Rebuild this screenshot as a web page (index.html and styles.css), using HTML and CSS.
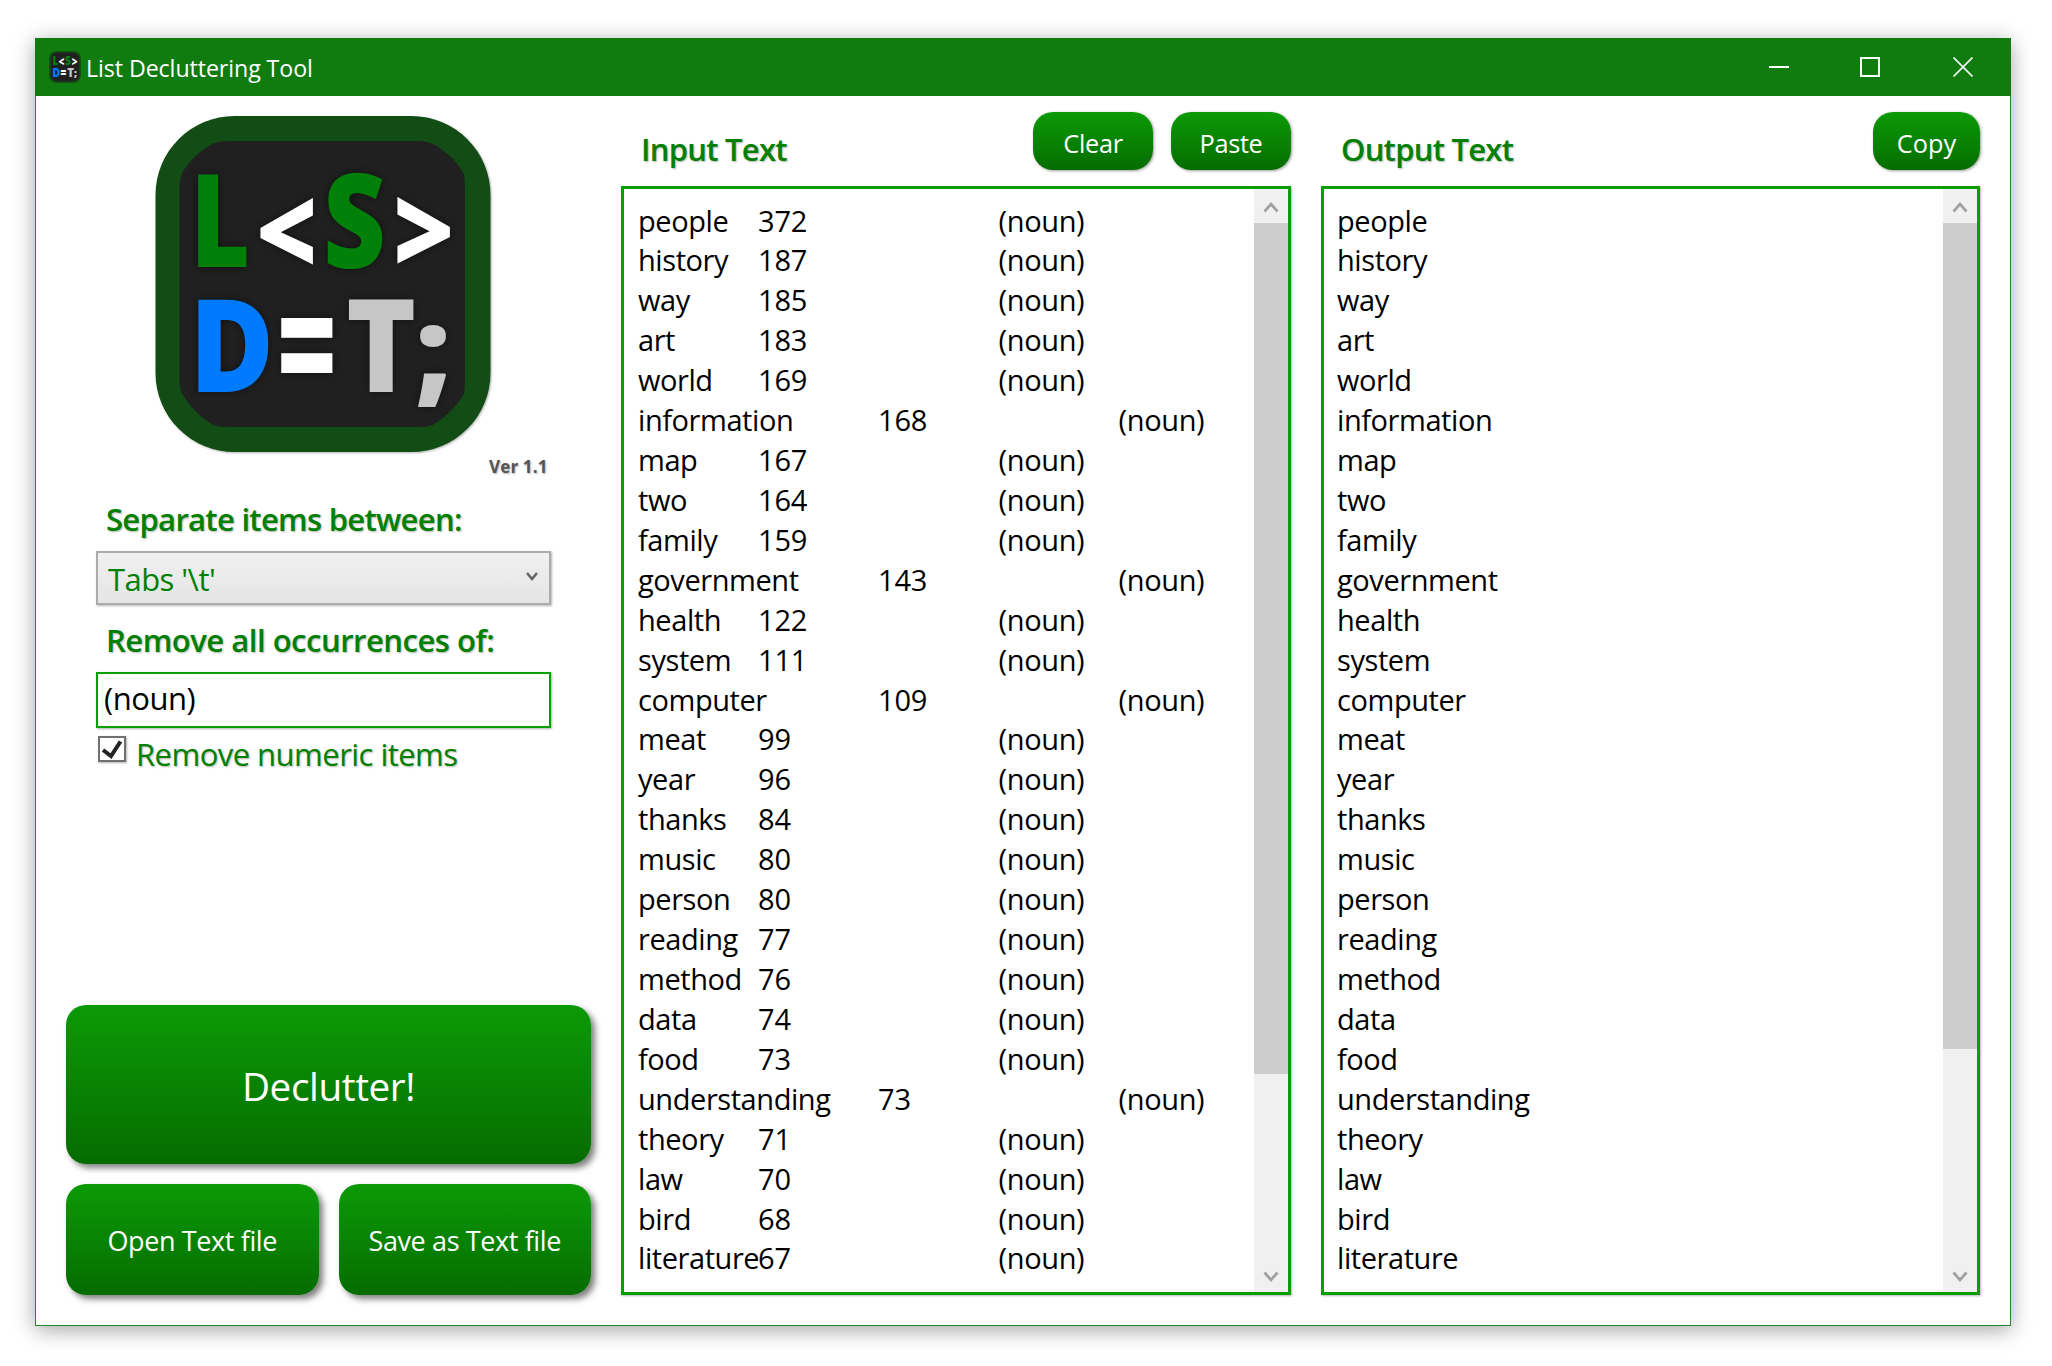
FILE: index.html
```
<!DOCTYPE html>
<html lang="en">
<head>
<meta charset="utf-8">
<title>List Decluttering Tool</title>
<link rel="stylesheet" href="styles.css">
</head>
<body>
<div class="window">
  <header class="titlebar">
    <svg class="titlebar-icon" viewBox="155 116 336 337" aria-hidden="true">
      <rect x="155" y="116" width="336" height="337" rx="78" fill="#124d15"/>
      <rect x="174" y="135" width="298" height="299" rx="60" fill="#202020"/>
      <g class="mark">
        <text transform="translate(190.3 267) scale(1.03 1.3)" fill="#008008">L</text>
        <text transform="translate(255.8 274.7) scale(1.06 1.214)" fill="#fff">&lt;</text>
        <text transform="translate(323.1 267.7) scale(1.09 1.32)" fill="#008008">S</text>
        <text transform="translate(392.8 274.2) scale(1.06 1.214)" fill="#fff">&gt;</text>
        <text transform="translate(189.4 392) scale(1.153 1.3)" fill="#007aff">D</text>
        <text class="mark-equals" transform="translate(273.7 411.8) scale(1.141 1.964)" fill="#fff">=</text>
        <text transform="translate(346.1 392) scale(1.19 1.3)" fill="#c6c6c6">T</text>
        <text transform="translate(414.5 390.6) scale(1.26 1.17)" fill="#c6c6c6">;</text>
      </g>
    </svg>
    <h1 class="titlebar-text">List Decluttering Tool</h1>
    <div class="controls">
      <svg width="20" height="20" viewBox="0 0 20 20"><path d="M0 10H20" stroke="#fff" stroke-width="2"/></svg>
      <svg width="20" height="20" viewBox="0 0 20 20"><rect x="1" y="1" width="18" height="18" fill="none" stroke="#fff" stroke-width="2"/></svg>
      <svg width="20" height="20" viewBox="0 0 20 20"><path d="M.5 .5L19.500 19.500M19.500 .5L.5 19.500" stroke="#f0f6f0" stroke-width="1.700"/></svg>
    </div>
  </header>
  <main class="content">
    <section class="sidebar">
      <svg class="logo" viewBox="155 116 336 337" role="img" aria-label="List Decluttering Tool">
        <rect x="155.500" y="116" width="335" height="336" rx="79" fill="#124d15"/>
        <path d="M227 141H419.500Q432 141.500 441 149Q456 159 464 174Q464.500 180 465 187V380Q465 389 464 394Q452 414 432 425.500Q426 427 419.500 427H226Q219 427 213 425Q193 413 181.500 393Q179.500 386 179.500 380V187Q179.500 180 182 173Q193 154 213 143.500Q219 141 227 141Z" fill="#202020"/>
        <g class="mark mark-shadow">
          <text transform="translate(190.3 267) scale(1.03 1.3)" fill="#008008">L</text>
          <text transform="translate(255.8 274.7) scale(1.06 1.214)" fill="#fff">&lt;</text>
          <text transform="translate(323.1 267.7) scale(1.09 1.32)" fill="#008008">S</text>
          <text transform="translate(392.8 274.2) scale(1.06 1.214)" fill="#fff">&gt;</text>
          <text transform="translate(189.4 392) scale(1.153 1.3)" fill="#007aff">D</text>
          <text class="mark-equals" transform="translate(273.7 411.8) scale(1.141 1.964)" fill="#fff">=</text>
          <text transform="translate(346.1 392) scale(1.19 1.3)" fill="#c6c6c6">T</text>
          <text transform="translate(414.5 390.6) scale(1.26 1.17)" fill="#c6c6c6">;</text>
        </g>
      </svg>
      <div class="version">Ver 1.1</div>
      <div class="label label-separate">Separate items between:</div>
      <div class="combo">
        <span>Tabs '\t'</span>
        <svg class="combo-arrow" width="12" height="10" viewBox="0 0 12 10"><path d="M1 1L6 7L11 1" fill="none" stroke="#666" stroke-width="2.600"/></svg>
      </div>
      <div class="label label-remove">Remove all occurrences of:</div>
      <div class="field">(noun)</div>
      <div class="check">
        <span class="check-box"><svg width="24" height="22" viewBox="0 0 24 22"><path d="M3 12L11 18L20.500 3.500" fill="none" stroke="#222" stroke-width="4"/></svg></span>
        <span class="check-label">Remove numeric items</span>
      </div>
      <div class="actions">
        <div class="button button-main">Declutter!</div>
        <div class="actions-row">
          <div class="button button-file">Open Text file</div>
          <div class="button button-file">Save as Text file</div>
        </div>
      </div>
    </section>

    <section class="panel">
      <div class="panel-head">
        <h2 class="panel-title">Input Text</h2>
        <div class="button button-small">Clear</div>
        <div class="button button-small">Paste</div>
      </div>
      <div class="box">
        <div class="lines lines-input">
          <div class="row"><span>people</span><b>372</b><i>(noun)</i></div>
          <div class="row"><span>history</span><b>187</b><i>(noun)</i></div>
          <div class="row"><span>way</span><b>185</b><i>(noun)</i></div>
          <div class="row"><span>art</span><b>183</b><i>(noun)</i></div>
          <div class="row"><span>world</span><b>169</b><i>(noun)</i></div>
          <div class="row row-wide"><span>information</span><b>168</b><i>(noun)</i></div>
          <div class="row"><span>map</span><b>167</b><i>(noun)</i></div>
          <div class="row"><span>two</span><b>164</b><i>(noun)</i></div>
          <div class="row"><span>family</span><b>159</b><i>(noun)</i></div>
          <div class="row row-wide"><span>government</span><b>143</b><i>(noun)</i></div>
          <div class="row"><span>health</span><b>122</b><i>(noun)</i></div>
          <div class="row"><span>system</span><b>111</b><i>(noun)</i></div>
          <div class="row row-wide"><span>computer</span><b>109</b><i>(noun)</i></div>
          <div class="row"><span>meat</span><b>99</b><i>(noun)</i></div>
          <div class="row"><span>year</span><b>96</b><i>(noun)</i></div>
          <div class="row"><span>thanks</span><b>84</b><i>(noun)</i></div>
          <div class="row"><span>music</span><b>80</b><i>(noun)</i></div>
          <div class="row"><span>person</span><b>80</b><i>(noun)</i></div>
          <div class="row"><span>reading</span><b>77</b><i>(noun)</i></div>
          <div class="row"><span>method</span><b>76</b><i>(noun)</i></div>
          <div class="row"><span>data</span><b>74</b><i>(noun)</i></div>
          <div class="row"><span>food</span><b>73</b><i>(noun)</i></div>
          <div class="row row-wide"><span>understanding</span><b>73</b><i>(noun)</i></div>
          <div class="row"><span>theory</span><b>71</b><i>(noun)</i></div>
          <div class="row"><span>law</span><b>70</b><i>(noun)</i></div>
          <div class="row"><span>bird</span><b>68</b><i>(noun)</i></div>
          <div class="row"><span>literature</span><b>67</b><i>(noun)</i></div>
        </div>
        <div class="scroll">
          <div class="scroll-arrow"><svg width="16" height="12" viewBox="0 0 16 12"><path d="M1.500 10.500L8 3L14.500 10.500" fill="none" stroke="#a0a0a0" stroke-width="2.700"/></svg></div>
          <div class="thumb thumb-input"></div>
          <div class="scroll-arrow scroll-down"><svg width="16" height="12" viewBox="0 0 16 12"><path d="M1.500 1.500L8 9L14.500 1.500" fill="none" stroke="#a0a0a0" stroke-width="2.700"/></svg></div>
        </div>
      </div>
    </section>

    <section class="panel">
      <div class="panel-head">
        <h2 class="panel-title">Output Text</h2>
        <div class="button button-small button-copy">Copy</div>
      </div>
      <div class="box">
        <div class="lines">
          <div>people</div><div>history</div><div>way</div><div>art</div><div>world</div><div>information</div><div>map</div><div>two</div><div>family</div>
          <div>government</div><div>health</div><div>system</div><div>computer</div><div>meat</div><div>year</div><div>thanks</div><div>music</div><div>person</div>
          <div>reading</div><div>method</div><div>data</div><div>food</div><div>understanding</div><div>theory</div><div>law</div><div>bird</div><div>literature</div>
        </div>
        <div class="scroll">
          <div class="scroll-arrow"><svg width="16" height="12" viewBox="0 0 16 12"><path d="M1.500 10.500L8 3L14.500 10.500" fill="none" stroke="#a0a0a0" stroke-width="2.700"/></svg></div>
          <div class="thumb thumb-output"></div>
          <div class="scroll-arrow scroll-down"><svg width="16" height="12" viewBox="0 0 16 12"><path d="M1.500 1.500L8 9L14.500 1.500" fill="none" stroke="#a0a0a0" stroke-width="2.700"/></svg></div>
        </div>
      </div>
    </section>
  </main>
</div>
</body>
</html>
```
FILE: styles.css
```
* { box-sizing: border-box; }
html { background: #fff; }
body {
  margin: 0;
  padding: 38px 41px 40px 35px;
  height: 1366px;
  font-family: "Open Sans", "Noto Sans", sans-serif;
  color: #000;
  overflow: hidden;
}
svg { display: block; flex: none; }
h1, h2 { margin: 0; font-weight: inherit; }

.window {
  display: flex;
  flex-direction: column;
  height: 1288px;
  background: #fff;
  border: 1px solid #2a872a;
  box-shadow: 0 4px 20px rgba(0, 0, 0, .36);
}

.titlebar {
  display: flex;
  flex: none;
  align-items: center;
  height: 58px;
  margin: -1px -1px 0;
  padding: 0 38px 0 14px;
  background: #107c10;
  color: #fff;
}
.titlebar-icon { width: 32px; height: 32px; }
.titlebar-text {
  margin-left: 5px;
  padding-top: 2px;
  font-size: 23.2px;
  line-height: 30px;
  letter-spacing: -.08px;
}
.controls { display: flex; gap: 73px; margin-left: auto; }
.controls svg:first-child { margin-right: -2px; }

.mark { font: 800 100px "Open Sans", sans-serif; }
.mark-equals { font-family: Lato, sans-serif; font-weight: 900; }
.mark-shadow { filter: drop-shadow(0 0 4px rgba(0, 0, 0, .5)); }

.content {
  display: grid;
  grid-template-columns: 525px 670px 659px;
  gap: 30px;
  flex: 1;
  min-height: 0;
  padding: 0 30px 30px;
}

.sidebar {
  display: flex;
  flex-direction: column;
  padding-top: 20px;
  min-height: 0;
}
.logo {
  width: 336px;
  height: 337px;
  margin-left: 89px;
  filter: drop-shadow(1px 1px 1px rgba(0, 0, 0, .3));
}
.version {
  margin: 4px 0 0 423px;
  font-size: 17px;
  font-weight: 700;
  line-height: 20px;
  letter-spacing: .15px;
  white-space: nowrap;
  color: #555;
  text-shadow: 1px 1px 2px rgba(0, 0, 0, .3);
}
.label, .panel-title {
  font-size: 31px;
  font-weight: 600;
  line-height: 40px;
  white-space: nowrap;
  color: #008000;
  text-shadow: 1px 1px 2px rgba(0, 0, 0, .3);
}
.label { padding-left: 40px; }
.label-separate { margin-top: 22px; letter-spacing: -.7px; }
.label-remove { margin-top: 15px; letter-spacing: -.48px; }
.combo {
  display: flex;
  justify-content: space-between;
  width: 455px;
  height: 54px;
  margin: 12px 0 0 30px;
  padding: 0 11px 0 10px;
  border: 2px solid #acacac;
  background: linear-gradient(#f0f0f0, #e5e5e5);
  box-shadow: 1px 1px 2px rgba(0, 0, 0, .3);
  font-size: 31px;
  line-height: 52px;
  letter-spacing: -.55px;
  color: #008000;
}
.combo-arrow { margin-top: 19px; }
.field {
  width: 455px;
  height: 56px;
  margin: 12px 0 0 30px;
  padding-left: 6px;
  border: 2px solid #0a9f00;
  box-shadow: 1px 1px 2px rgba(0, 0, 0, .3);
  font-size: 31px;
  line-height: 49px;
  letter-spacing: -.46px;
}
.check {
  display: flex;
  gap: 10px;
  margin: 6px 0 0 32px;
}
.check-box {
  width: 28px;
  height: 26px;
  margin-top: 2px;
  border: 2px solid #707070;
  background: #fff;
  box-shadow: 1px 1px 2px rgba(0, 0, 0, .3);
}
.check-label {
  font-size: 31px;
  line-height: 40px;
  letter-spacing: -.53px;
  color: #008000;
  text-shadow: 1px 1px 2px rgba(0, 0, 0, .3);
}

.button {
  display: flex;
  align-items: center;
  justify-content: center;
  border-radius: 20px;
  background: linear-gradient(#0c9a06, #056c00);
  color: #fff;
  white-space: nowrap;
}
.actions {
  display: flex;
  flex-direction: column;
  gap: 20px;
  margin-top: auto;
}
.actions-row { display: flex; gap: 20px; }
.button-main {
  height: 159px;
  padding-top: 3px;
  font-size: 38.7px;
  letter-spacing: -.4px;
  box-shadow: 4px 4px 6px rgba(0, 0, 0, .5);
}
.button-file {
  flex: 1;
  height: 111px;
  padding-top: 1px;
  font-size: 27px;
  letter-spacing: -.38px;
  box-shadow: 4px 4px 6px rgba(0, 0, 0, .5);
}
.button-small {
  width: 120px;
  height: 58px;
  padding-top: 3px;
  font-size: 25.3px;
  letter-spacing: -.3px;
  box-shadow: 1px 1px 3px rgba(0, 0, 0, .4);
}
.button-copy { width: 107px; letter-spacing: .1px; }

.panel {
  display: flex;
  flex-direction: column;
  min-height: 0;
  padding-top: 16px;
}
.panel-head {
  display: flex;
  flex: none;
  align-items: flex-start;
  gap: 18px;
  height: 74px;
}
.panel-title {
  margin: 17px auto 0 20px;
  letter-spacing: -.74px;
}
.box {
  display: flex;
  flex: 1;
  min-height: 0;
  border: 3px solid #0a9f00;
  box-shadow: 1px 1px 2px rgba(0, 0, 0, .3);
}
.lines {
  flex: 1;
  padding: 11.5px 0 0 13px;
  font-size: 29px;
  line-height: 39.92px;
  letter-spacing: -.43px;
}
.lines-input { padding-left: 14px; }
.row {
  display: grid;
  grid-template-columns: 120px 240.500px auto;
}
.row-wide { grid-template-columns: 240px 240.500px auto; }
.row b, .row i {
  font-weight: 400;
  font-style: normal;
  letter-spacing: -.2px;
}
.row i { letter-spacing: -.35px; }
.scroll {
  display: flex;
  flex-direction: column;
  width: 34px;
  background: #f0f0f0;
}
.scroll-arrow {
  display: flex;
  justify-content: center;
  flex: none;
  height: 34px;
  padding-top: 12px;
}
.scroll-down { margin-top: auto; padding-top: 13px; }
.thumb { background: #cdcdcd; }
.thumb-input { height: 851px; }
.thumb-output { height: 826px; }
```
